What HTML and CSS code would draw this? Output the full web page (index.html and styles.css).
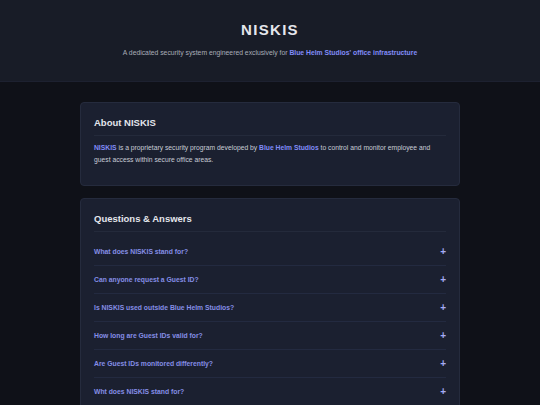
FILE: index.html
```html
<!DOCTYPE html>
<html lang="en">
<head>
  <meta charset="UTF-8">
  <meta name="viewport" content="width=device-width, initial-scale=1.0">
  <title>NISKIS</title>
  <link rel="stylesheet" href="styles.css">
</head>
<body>
  <header class="top">
    <h1>NISKIS</h1>
    <p class="tagline">A dedicated security system engineered exclusively for <span class="hl">Blue Helm Studios' office infrastructure</span></p>
  </header>

  <main class="content">
    <section class="card">
      <h2>About NISKIS</h2>
      <p class="about"><span class="hl">NISKIS</span> is a proprietary security program developed by <span class="hl">Blue Helm Studios</span> to control and monitor employee and guest access within secure office areas.</p>
    </section>

    <section class="card">
      <h2>Questions &amp; Answers</h2>
      <ul class="faq">
        <li><span>What does NISKIS stand for?</span><i class="plus">+</i></li>
        <li><span>Can anyone request a Guest ID?</span><i class="plus">+</i></li>
        <li><span>Is NISKIS used outside Blue Helm Studios?</span><i class="plus">+</i></li>
        <li><span>How long are Guest IDs valid for?</span><i class="plus">+</i></li>
        <li><span>Are Guest IDs monitored differently?</span><i class="plus">+</i></li>
        <li><span>Wht does NISKIS stand for?</span><i class="plus">+</i></li>
      </ul>
    </section>
  </main>
</body>
</html>
```

FILE: styles.css
```css
* {
  box-sizing: border-box;
}
body {
  margin: 0;
  background: #0f1118;
  color: #d4d7df;
  font-family: "Liberation Sans", Arial, sans-serif;
}
.top {
  background: #181c27;
  height: 82px;
  padding-top: 21px;
  text-align: center;
  border-bottom: 1px solid #1d2130;
}
.top h1 {
  margin: 0;
  font-size: 15px;
  letter-spacing: 1.3px;
  color: #e4e6ec;
  line-height: 18px;
}
.tagline {
  margin: 9px 0 0;
  font-size: 6.8px;
  line-height: 10px;
  color: #a8acb8;
}
.hl {
  color: #818cf8;
  font-weight: bold;
}
.content {
  width: 380px;
  margin: 20px auto 0;
}
.card {
  background: #1b2030;
  border: 1px solid #252b3d;
  border-radius: 4px;
  padding: 13px 13px 19px;
  margin-bottom: 12px;
}
.card h2 {
  margin: 0;
  font-size: 9.5px;
  line-height: 14px;
  color: #e4e6ec;
  padding-bottom: 5px;
  border-bottom: 1px solid #242a3b;
}
.about {
  margin: 6px 0 0;
  font-size: 6.75px;
  line-height: 12px;
  color: #c8ccd6;
}
.faq {
  list-style: none;
  margin: 0;
  padding: 6px 0 0;
}
.faq li {
  display: flex;
  justify-content: space-between;
  align-items: center;
  height: 28px;
  border-bottom: 1px solid #232a40;
  font-size: 6.8px;
  font-weight: bold;
  color: #858ee6;
}
.plus {
  font-style: normal;
  font-weight: bold;
  font-size: 10px;
  color: #a5abf5;
}
```
